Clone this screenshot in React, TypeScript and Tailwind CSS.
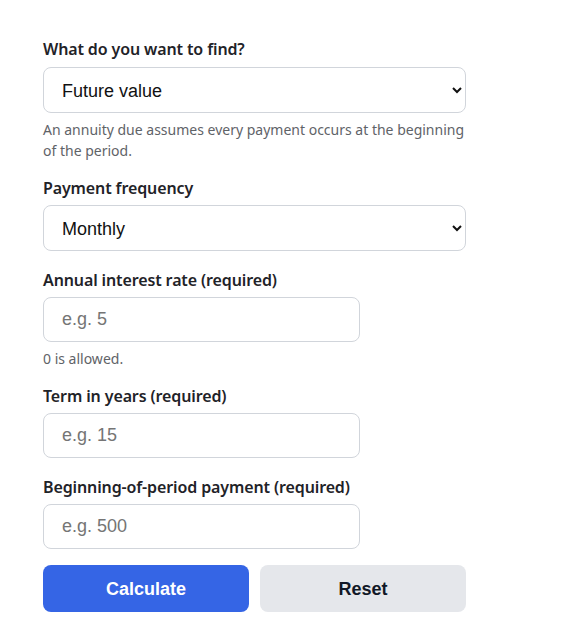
import React from "react";

const labelCls = "block text-[16px] leading-[24px] font-semibold tracking-[-0.12px] text-[#1f2328] [font-family:'Noto_Sans',sans-serif]";
const helperCls = "text-[14px] leading-[21px] text-[#5f6368] [font-family:'Noto_Sans',sans-serif]";
const selectCls = "block w-full h-[46px] rounded-[8px] border border-[#d1d5db] bg-white pl-[14px] pr-[10px] pt-[2px] text-[18px] text-[#111] [font-family:'Liberation_Sans',Arial,sans-serif]";
const inputCls = "block w-[317px] h-[45px] rounded-[8px] border border-[#d1d5db] bg-white px-[18px] text-[18px] text-[#111] placeholder:text-[#757575] [font-family:'Liberation_Sans',Arial,sans-serif]";

export default function App() {
  return (
    <div className="min-h-[637px] bg-white">
      <div className="ml-[43px] w-[423px] pt-[37px] pb-[20px] flex flex-col">
        <label className={labelCls}>What do you want to find?</label>
        <select className={`${selectCls} mt-[6px]`} defaultValue="fv">
          <option value="fv">Future value</option>
          <option value="pv">Present value</option>
          <option value="pmt">Payment</option>
        </select>
        <p className={`${helperCls} mt-[6px]`}>
          An annuity due assumes every payment occurs at the beginning of the period.
        </p>

        <label className={`${labelCls} mt-[15px]`}>Payment frequency</label>
        <select className={`${selectCls} mt-[5px]`} defaultValue="monthly">
          <option value="monthly">Monthly</option>
          <option value="quarterly">Quarterly</option>
          <option value="annually">Annually</option>
        </select>

        <label className={`${labelCls} mt-[17px]`}>Annual interest rate (required)</label>
        <input className={`${inputCls} mt-[5px]`} placeholder="e.g. 5" />
        <p className={`${helperCls} mt-[6px]`}>0 is allowed.</p>

        <label className={`${labelCls} mt-[15px]`}>Term in years (required)</label>
        <input className={`${inputCls} mt-[5px]`} placeholder="e.g. 15" />

        <label className={`${labelCls} mt-[17px]`}>Beginning-of-period payment (required)</label>
        <input className={`${inputCls} mt-[5px]`} placeholder="e.g. 500" />

        <div className="mt-[16px] grid grid-cols-2 gap-[11px]">
          <button className="h-[47px] pt-[1px] rounded-[8px] bg-[#3565e5] text-white text-[18px] font-bold [font-family:'Liberation_Sans',Arial,sans-serif]">
            Calculate
          </button>
          <button className="h-[47px] pt-[1px] rounded-[8px] bg-[#e5e7eb] text-[#111827] text-[18px] font-bold [font-family:'Liberation_Sans',Arial,sans-serif]">
            Reset
          </button>
        </div>
      </div>
    </div>
  );
}
